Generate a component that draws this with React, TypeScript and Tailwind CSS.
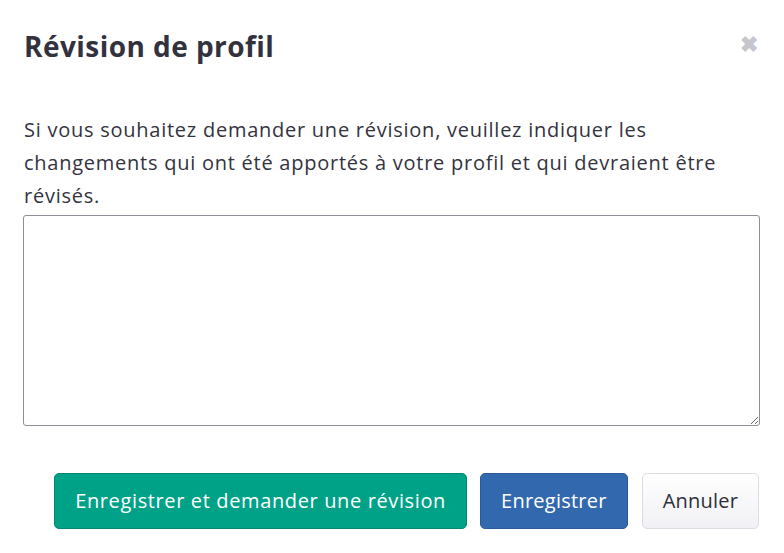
import { useState } from "react";

const font = { fontFamily: "'Open Sans', 'Noto Sans', sans-serif" };

export default function App() {
  const [note, setNote] = useState("");

  return (
    <div className="w-[784px] h-[553px] bg-white text-[#333340]" style={font}>
      <div className="flex items-start justify-between pl-6 pr-[26px] pt-[27px]">
        <h2 className="text-[28px] leading-[38px] font-bold tracking-[0.45px] text-[#32323e]">
          Révision de profil
        </h2>
        <button className="mt-[6px] text-[#c6c6ce] text-[22px] leading-[20px] font-black">
          ✖
        </button>
      </div>

      <div className="px-6 pt-[48px]">
        <p className="text-[20px] leading-[33px] tracking-[0.75px] whitespace-nowrap">
          Si vous souhaitez demander une révision, veuillez indiquer les
          <br />
          changements qui ont été apportés à votre profil et qui devraient être
          <br />
          révisés.
        </p>
        <textarea
          value={note}
          onChange={(e) => setNote(e.target.value)}
          className="block mt-[3px] w-[737px] -ml-px h-[211px] border border-[#8e8e98] rounded-[3px] p-2 text-[20px] outline-none"
        />
      </div>

      <div className="flex justify-end pr-[25px] pt-[47px]">
        <button className="h-14 px-5 rounded-[5px] bg-[#00a287] border border-[#00876f] text-white text-[20px] tracking-[0.63px]">
          Enregistrer et demander une révision
        </button>
        <button className="ml-[13px] h-14 px-5 rounded-[5px] bg-[#3269ae] border border-[#2a5a97] text-white text-[20px] tracking-[0.25px]">
          Enregistrer
        </button>
        <button className="ml-[14px] h-14 px-5 rounded-[5px] bg-gradient-to-b from-white to-[#f1f1f5] border border-[#dcdce4] text-[#2f2f3a] text-[20px] tracking-[0.2px]">
          Annuler
        </button>
      </div>
    </div>
  );
}
